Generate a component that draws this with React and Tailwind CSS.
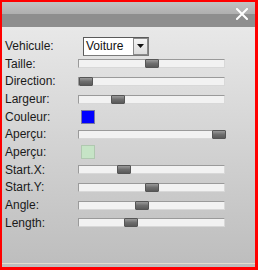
import React from "react";

function Slider({ pos }) {
  return (
    <div className="relative w-[147px] h-[9px] bg-[#f2f2f2] border-t border-l border-[#9a9a9a] border-b border-b-[#d8d8d8] border-r border-r-[#d8d8d8] box-border">
      <div
        className="absolute top-[-1px] h-[9px] w-[14px] rounded-[1px] bg-gradient-to-b from-[#9a9a9a] via-[#6e6e6e] to-[#5a5a5a] border border-[#555]"
        style={{ left: pos - 79 }}
      />
    </div>
  );
}

function Row({ label, children }) {
  return (
    <div className="flex items-center h-[17.67px]">
      <div className="w-[74px] pl-[1px] text-[12px] leading-none text-[#1a1a1a]">{label}</div>
      {children}
    </div>
  );
}

export default function App() {
  return (
    <div
      className="w-[258px] h-[270px] box-border border-l-2 border-t-2 border-r-[3px] border-b-[3px] border-[#ff0000] flex flex-col overflow-hidden"
      style={{ fontFamily: '"Liberation Sans", Arial, sans-serif' }}
    >
      <div className="h-[25px] flex flex-col relative shrink-0">
        <div className="h-[12px] bg-gradient-to-b from-[#c2c2c2] to-[#afafaf]" />
        <div className="h-[13px] bg-[#8e8e8e]" />
        <svg
          className="absolute left-[234px] top-[6px]"
          width="12"
          height="12"
          viewBox="0 0 12 12"
        >
          <path d="M1 1 L11 11 M11 1 L1 11" stroke="#ffffff" strokeWidth="2" strokeLinecap="square" />
        </svg>
      </div>
      <div className="flex-1 flex flex-col bg-gradient-to-b from-[#e8e8e8] to-[#bdbdbd] pl-[2px] pt-[10px] relative">
        <div className="flex items-center h-[18px]">
          <div className="w-[79px] pl-[1px] text-[12px] leading-none text-[#1a1a1a]">Vehicule:</div>
          <div className="flex h-[19px] w-[66px] border border-[#7a7a7a] border-t-[#5a5a5a] border-l-[#5a5a5a] bg-white box-border items-center">
            <span className="flex-1 pl-[2px] text-[12px] leading-none text-[#111]">Voiture</span>
            <div className="w-[15px] h-[17px] border border-[#8a8a8a] bg-gradient-to-b from-[#f4f4f4] to-[#dcdcdc] flex items-center justify-center box-border">
              <svg width="7" height="4" viewBox="0 0 7 4">
                <path d="M0 0 L7 0 L3.5 4 Z" fill="#111" />
              </svg>
            </div>
          </div>
        </div>
        <Row label="Taille:"><Slider pos={145} /></Row>
        <Row label="Direction:"><Slider pos={79} /></Row>
        <Row label="Largeur:"><Slider pos={111} /></Row>
        <Row label="Couleur:">
          <div className="ml-[3px] w-[14px] h-[14px] bg-[#0000ff] border border-[#7a7aa0]" />
        </Row>
        <Row label="Aperçu:"><Slider pos={212} /></Row>
        <Row label="Aperçu:">
          <div className="ml-[3px] w-[14px] h-[14px] bg-[#c6e4c6] border border-[#b0c8b0]" />
        </Row>
        <Row label="Start.X:"><Slider pos={117} /></Row>
        <Row label="Start.Y:"><Slider pos={145} /></Row>
        <Row label="Angle:"><Slider pos={135} /></Row>
        <Row label="Length:"><Slider pos={124} /></Row>
        <div className="absolute left-0 right-0 bottom-[3px] h-px bg-[#e4dccd]" />
      </div>
    </div>
  );
}
